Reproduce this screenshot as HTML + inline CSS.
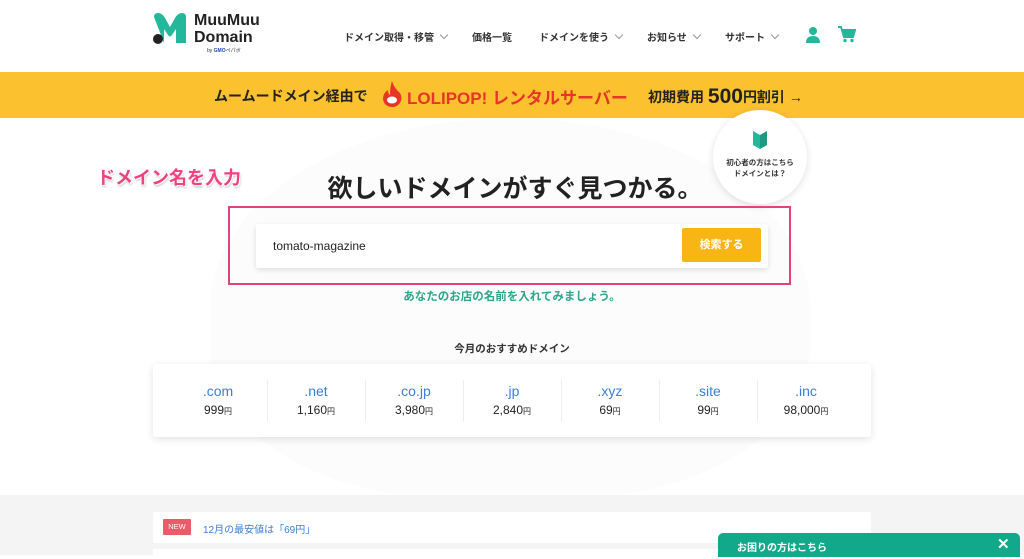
<!DOCTYPE html>
<html><head><meta charset="utf-8"><style>
*{margin:0;padding:0;box-sizing:border-box}
body{width:1024px;height:555px;overflow:hidden;background:#fff;font-family:"Liberation Sans","Noto Sans CJK JP",sans-serif;color:#222;position:relative}
.abs{position:absolute}
.nav{font-size:10px;color:#333;font-weight:bold;top:29px;white-space:nowrap}
.chev{display:inline-block;width:6px;height:6px;border-right:1px solid #999;border-bottom:1px solid #999;transform:rotate(45deg);margin-left:7px;position:relative;top:-3px}
.col{position:absolute;top:0;width:98px;height:73px;text-align:center}
.col .d{color:#3a7fd5;font-size:14px;margin-top:19px}
.col .p{font-size:12px;margin-top:4px;color:#222}
.col .p small{font-size:8px}
.sep{position:absolute;top:16px;width:1px;height:42px;background:#eee}
</style></head><body>
<div class="abs" style="left:210px;top:118px;width:600px;height:380px;background:#fcfcfc;border-radius:50% 50% 40% 40%"></div>
<div class="abs" style="left:152px;top:13px;width:36px;height:32px">
<svg width="36" height="32" viewBox="0 0 36 32"><path d="M2 4 Q2 0 6 0 Q10 0 13 5 L18 14 L23 5 Q26 0 30 0 Q34 0 34 4 V30 H24 V16 L20 22 Q18 25 16 22 L12 16 V30 H12" fill="#25b79b"/><circle cx="6" cy="26" r="5" fill="#222"/></svg></div>
<div class="abs" style="left:194px;top:12px;font-size:16px;font-weight:bold;line-height:17px;color:#222">MuuMuu<br>Domain</div>
<div class="abs" style="left:207px;top:47px;font-size:5px;color:#333">by <b style="color:#1c4aa8">GMO</b>ペパボ</div>
<div class="abs nav" style="left:344px">ドメイン取得・移管<span class="chev"></span></div>
<div class="abs nav" style="left:472px">価格一覧</div>
<div class="abs nav" style="left:539px">ドメインを使う<span class="chev"></span></div>
<div class="abs nav" style="left:647px">お知らせ<span class="chev"></span></div>
<div class="abs nav" style="left:725px">サポート<span class="chev"></span></div>
<svg class="abs" style="left:805px;top:26px" width="16" height="17" viewBox="0 0 16 17"><circle cx="8" cy="5" r="4" fill="#25b79b"/><path d="M1 17 Q1 10 8 10 Q15 10 15 17Z" fill="#25b79b"/></svg>
<svg class="abs" style="left:838px;top:26px" width="18" height="17" viewBox="0 0 18 17"><path d="M0 1 H3 L6 11 H15 L17 4 H4" fill="none" stroke="#25b79b" stroke-width="2"/><rect x="5" y="4" width="11" height="6" fill="#25b79b"/><circle cx="7" cy="14.5" r="1.7" fill="#25b79b"/><circle cx="14" cy="14.5" r="1.7" fill="#25b79b"/></svg>
<div class="abs" style="left:0;top:72px;width:1024px;height:46px;background:#fcc12e"></div>
<div class="abs" style="left:214px;top:86px;font-size:14px;font-weight:bold;color:#222;white-space:nowrap">ムームードメイン経由で</div>
<svg class="abs" style="left:381px;top:80px" width="22" height="28" viewBox="0 0 22 28"><path d="M11 1 Q13 8 19 13 Q22 18 19 23 Q15 28 10 27 Q3 26 2 19 Q2 13 7 10 Q7 14 9 15 Q9 7 11 1Z" fill="#e8352a"/><ellipse cx="11" cy="20" rx="5" ry="3.5" fill="#fff"/></svg>
<div class="abs" style="left:407px;top:84px;font-size:17px;font-weight:bold;color:#e8352a;white-space:nowrap">LOLIPOP! レンタルサーバー</div>
<div class="abs" style="left:648px;top:84px;font-size:14px;font-weight:bold;color:#222;white-space:nowrap">初期費用 <span style="font-size:21px;position:relative;top:1px">500</span>円割引 →</div>
<div class="abs" style="left:713px;top:110px;width:94px;height:94px;border-radius:50%;background:#fff;box-shadow:0 2px 8px rgba(0,0,0,.12);text-align:center">
<svg style="margin-top:20px" width="16" height="20" viewBox="0 0 16 20"><path d="M1 1 L8 5 V19 L1 15Z" fill="#25b79b"/><path d="M15 1 L8 5 V19 L15 15Z" fill="#1d9a82"/></svg>
<div style="font-size:7.5px;font-weight:bold;color:#333;line-height:11px;margin-top:2px">初心者の方はこちら<br>ドメインとは？</div></div>
<div class="abs" style="left:97px;top:164px;font-size:18px;font-weight:bold;color:#f0427f;text-shadow:1px 1px 0 #fff,0 0 3px #fff,1px 2px 2px rgba(0,0,0,.3)">ドメイン名を入力</div>
<div class="abs" style="left:0;width:1024px;top:169px;text-align:center;font-size:25px;font-weight:bold;color:#222;padding-left:6px">欲しいドメインがすぐ見つかる。</div>
<div class="abs" style="left:228px;top:206px;width:563px;height:79px;border:2px solid #e9407a"></div>
<div class="abs" style="left:256px;top:224px;width:512px;height:44px;background:#fff;box-shadow:0 2px 6px rgba(0,0,0,.12);border-radius:2px"></div>
<div class="abs" style="left:273px;top:239px;font-size:12px;color:#222">tomato-magazine</div>
<div class="abs" style="left:682px;top:228px;width:79px;height:34px;background:#f9b513;border-radius:2px;color:#fff;font-size:11px;font-weight:bold;text-align:center;line-height:34px">検索する</div>
<div class="abs" style="left:0;width:1024px;top:288px;text-align:center;font-size:11.5px;color:#2aa68a;font-weight:bold">あなたのお店の名前を入れてみましょう。</div>
<div class="abs" style="left:0;width:1024px;top:341px;text-align:center;font-size:10.5px;color:#333;font-weight:bold">今月のおすすめドメイン</div>
<div class="abs" style="left:153px;top:364px;width:718px;height:73px;background:#fff;box-shadow:0 2px 8px rgba(0,0,0,.12);border-radius:3px">
<div class="col" style="left:16px"><div class="d">.com</div><div class="p">999<small>円</small></div></div>
<div class="sep" style="left:114px"></div>
<div class="col" style="left:114px"><div class="d">.net</div><div class="p">1,160<small>円</small></div></div>
<div class="sep" style="left:212px"></div>
<div class="col" style="left:212px"><div class="d">.co.jp</div><div class="p">3,980<small>円</small></div></div>
<div class="sep" style="left:310px"></div>
<div class="col" style="left:310px"><div class="d">.jp</div><div class="p">2,840<small>円</small></div></div>
<div class="sep" style="left:408px"></div>
<div class="col" style="left:408px"><div class="d">.xyz</div><div class="p">69<small>円</small></div></div>
<div class="sep" style="left:506px"></div>
<div class="col" style="left:506px"><div class="d">.site</div><div class="p">99<small>円</small></div></div>
<div class="sep" style="left:604px"></div>
<div class="col" style="left:604px"><div class="d">.inc</div><div class="p">98,000<small>円</small></div></div>
</div>
<div class="abs" style="left:0;top:495px;width:1024px;height:60px;background:#f4f4f4"></div>
<div class="abs" style="left:153px;top:512px;width:718px;height:31px;background:#fff;border-radius:2px"></div>
<div class="abs" style="left:163px;top:519px;width:28px;height:16px;background:#ee5a6a;color:#fff;font-size:7.5px;text-align:center;line-height:16px;border-radius:1px">NEW</div>
<div class="abs" style="left:203px;top:521px;font-size:10px;color:#3a7fd5">12月の最安値は「69円」</div>
<div class="abs" style="left:153px;top:549px;width:718px;height:10px;background:#fff"></div>
<div class="abs" style="left:718px;top:533px;width:302px;height:24px;background:#11a98a;border-radius:5px 5px 0 0"></div>
<div class="abs" style="left:737px;top:539px;font-size:10px;color:#fff;font-weight:bold">お困りの方はこちら</div>
<div class="abs" style="left:997px;top:535px;font-size:15px;color:#fff;font-weight:bold">✕</div>
</body></html>
